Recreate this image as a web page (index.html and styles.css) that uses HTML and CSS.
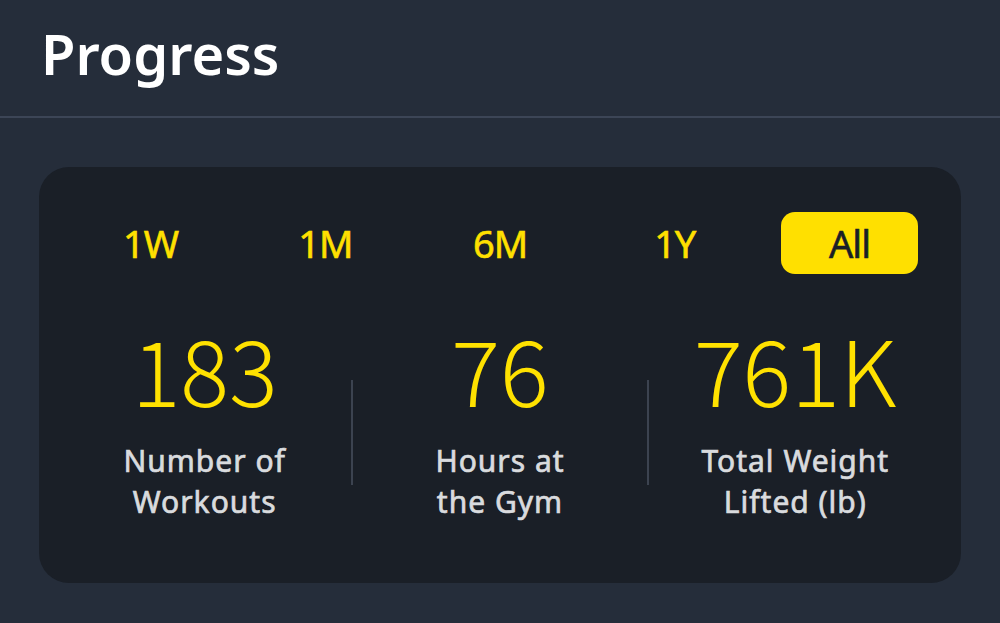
FILE: index.html
```html
<!DOCTYPE html>
<html lang="en">
<head>
    <meta charset="UTF-8">
    <meta name="viewport" content="width=device-width, initial-scale=1.0">
    <title>Progress</title>
    <link rel="stylesheet" href="styles.css">
</head>
<body>
    <header class="top">
        <h1 class="title">Progress</h1>
    </header>
    <section class="card">
        <div class="tabs">
            <span class="tab">1W</span>
            <span class="tab">1M</span>
            <span class="tab">6M</span>
            <span class="tab">1Y</span>
            <span class="tab tab_on">All</span>
        </div>
        <div class="stats">
            <div class="stat">
                <div class="num">183</div>
                <div class="label">Number of<br>Workouts</div>
            </div>
            <div class="sep"></div>
            <div class="stat">
                <div class="num">76</div>
                <div class="label">Hours at<br>the Gym</div>
            </div>
            <div class="sep"></div>
            <div class="stat">
                <div class="num">761K</div>
                <div class="label">Total Weight<br>Lifted (lb)</div>
            </div>
        </div>
    </section>
</body>
</html>
```
FILE: styles.css
```css
* {
    box-sizing: border-box;
}
body {
    margin: 0;
    width: 1000px;
    height: 623px;
    overflow: hidden;
    background-color: #252d3a;
    font-family: "Noto Sans", sans-serif;
}
.top {
    height: 118px;
    border-bottom: 2px solid #3c4556;
    padding: 13px 0 0 41px;
}
.title {
    margin: 0;
    font-weight: 600;
    font-size: 56px;
    line-height: 80px;
    color: #ffffff;
}
.card {
    margin: 49px 39px 0 39px;
    height: 416px;
    border-radius: 30px;
    background-color: #1a1f27;
    padding: 45px 43px 0 43px;
}
.tabs {
    display: flex;
    justify-content: space-between;
}
.tab {
    width: 137px;
    height: 62px;
    line-height: 62px;
    text-align: center;
    font-size: 38px;
    color: #ffe000;
    border-radius: 14px;
    letter-spacing: -1px;
    -webkit-text-stroke: 0.6px currentColor;
}
.tab_on {
    background-color: #ffe000;
    color: #1a1f27;
}
/* 숫자 세 칸 */
.stats {
    display: flex;
    align-items: flex-start;
    margin: 46px -24px 0 -24px;
}
.stat {
    flex: 1;
    text-align: center;
}
.num {
    margin-top: -3px;
    font-family: "Noto Sans CJK KR", "Noto Sans", sans-serif;
    font-size: 91px;
    font-weight: 300;
    line-height: 100px;
    color: #ffe100;
}
.label {
    margin-top: 23px;
    font-size: 30px;
    line-height: 41px;
    letter-spacing: 1px;
    color: #d9dbde;
    -webkit-text-stroke: 0.7px currentColor;
}
.sep {
    width: 2px;
    height: 105px;
    margin-top: 60px;
    background-color: #3c4350;
}
```
